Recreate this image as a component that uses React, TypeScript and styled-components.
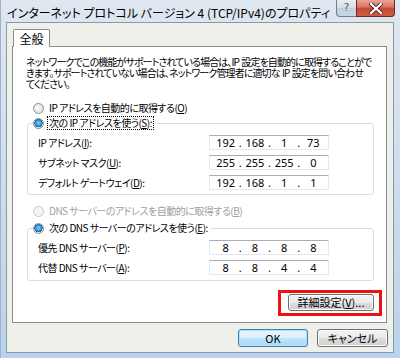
import styled, { createGlobalStyle } from "styled-components";

const GlobalStyle = createGlobalStyle`
  html, body {
    margin: 0;
    padding: 0;
    background: #fff;
  }
  body {
    font-family: "Noto Sans CJK JP", "Noto Sans", sans-serif;
    font-feature-settings: "palt" 1;
    color: #000;
  }
`

type IpProps = {
    value: string[]
}

function IpField(props: IpProps) {
    return (
        <IpBox>
            {props.value.map((part, i) => (
                <>
                    {i > 0 && <IpDot key={"d" + i}>.</IpDot>}
                    <IpPart key={"p" + i}>{part}</IpPart>
                </>
            ))}
        </IpBox>
    )
}

type RadioProps = {
    checked?: boolean
    disabled?: boolean
    focused?: boolean
    children: React.ReactNode
}

function Radio(props: RadioProps) {
    return (
        <RadioRow $disabled={props.disabled}>
            <RadioCircle $checked={props.checked} $disabled={props.disabled}/>
            <RadioText $focused={props.focused}>{props.children}</RadioText>
        </RadioRow>
    )
}

export default function App() {
    return (
        <>
            <GlobalStyle/>
            <Window>
                <TitleBar>
                    <Title>インターネット プロトコル バージョン 4 (TCP/IPv4)のプロパティ</Title>
                    <CaptionButtons>
                        <HelpButton>?</HelpButton>
                        <CloseButton>
                            <svg width="14" height="11" viewBox="0 0 14 11">
                                <path d="M2 1 L12 10 M12 1 L2 10" stroke="#4a2a2a" strokeWidth="4" strokeLinecap="square"/>
                                <path d="M2 1 L12 10 M12 1 L2 10" stroke="#fff" strokeWidth="2.2" strokeLinecap="square"/>
                            </svg>
                        </CloseButton>
                    </CaptionButtons>
                </TitleBar>
                <Client>
                    <TabStrip>
                        <Tab>全般</Tab>
                    </TabStrip>
                    <Panel>
                        <Description>
                            <DescLine>ネットワークでこの機能がサポートされている場合は、IP 設定を自動的に取得することがで</DescLine>
                            <DescLine>きます。サポートされていない場合は、ネットワーク管理者に適切な IP 設定を問い合わせ</DescLine>
                            <DescLine>てください。</DescLine>
                        </Description>
                        <TopRadio>
                            <Radio>IP アドレスを自動的に取得する(<u>O</u>)</Radio>
                        </TopRadio>
                        <Group>
                            <Legend>
                                <Radio checked focused>次の IP アドレスを使う(<u>S</u>):</Radio>
                            </Legend>
                            <FieldRow>
                                <FieldLabel>IP アドレス(<u>I</u>):</FieldLabel>
                                <IpField value={["192", "168", "1", "73"]}/>
                            </FieldRow>
                            <FieldRow>
                                <FieldLabel>サブネット マスク(<u>U</u>):</FieldLabel>
                                <IpField value={["255", "255", "255", "0"]}/>
                            </FieldRow>
                            <FieldRow>
                                <FieldLabel>デフォルト ゲートウェイ(<u>D</u>):</FieldLabel>
                                <IpField value={["192", "168", "1", "1"]}/>
                            </FieldRow>
                        </Group>
                        <DnsRadio>
                            <Radio disabled>DNS サーバーのアドレスを自動的に取得する(<u>B</u>)</Radio>
                        </DnsRadio>
                        <DnsGroup>
                            <Legend>
                                <Radio checked>次の DNS サーバーのアドレスを使う(<u>E</u>):</Radio>
                            </Legend>
                            <FieldRow>
                                <FieldLabel>優先 DNS サーバー(<u>P</u>):</FieldLabel>
                                <IpField value={["8", "8", "8", "8"]}/>
                            </FieldRow>
                            <FieldRow>
                                <FieldLabel>代替 DNS サーバー(<u>A</u>):</FieldLabel>
                                <IpField value={["8", "8", "4", "4"]}/>
                            </FieldRow>
                        </DnsGroup>
                        <Highlight>
                            <Button $width={86}>詳細設定(<u>V</u>)...</Button>
                        </Highlight>
                    </Panel>
                    <Footer>
                        <Button $width={70} $default>OK</Button>
                        <Button $width={71}>キャンセル</Button>
                    </Footer>
                </Client>
            </Window>
        </>
    )
}

const Window = styled.div`
  width: 400px;
  height: 358px;
  box-sizing: border-box;
  display: flex;
  flex-direction: column;
  background: linear-gradient(180deg, #dfe7f0 0%, #d2dfec 40%, #c4d6ea 80%, #b9d3ee 100%);
  border-left: 1px solid #9fb2c8;
`

const TitleBar = styled.div`
  height: 22px;
  display: flex;
  align-items: flex-start;
  justify-content: space-between;
`

const Title = styled.div`
  padding: 5px 0 0 6px;
  font-size: 12px;
  line-height: 16px;
  white-space: nowrap;
  color: #000;
`

const CaptionButtons = styled.div`
  display: flex;
  margin-right: 5px;
`

const HelpButton = styled.div`
  width: 20px;
  height: 17px;
  box-sizing: border-box;
  border: 1px solid #6f7f91;
  border-right: none;
  border-top: none;
  border-radius: 0 0 0 4px;
  background: linear-gradient(180deg, #e9eef4 0%, #d3dbe5 50%, #c4cfdc 51%, #cbd6e3 100%);
  font-family: "DejaVu Sans", sans-serif;
  font-size: 11px;
  line-height: 15px;
  text-align: center;
  color: #4d5a6b;
  text-shadow: 0 0 2px #fff;
`

const CloseButton = styled.div`
  width: 39px;
  height: 17px;
  box-sizing: border-box;
  border: 1px solid #6b2a22;
  border-top: none;
  border-radius: 0 0 4px 0;
  background: linear-gradient(180deg, #e8a497 0%, #d8735f 45%, #c24a32 50%, #cf5c3f 100%);
  display: flex;
  align-items: center;
  justify-content: center;
`

const Client = styled.div`
  flex: 1;
  margin: 0 6px 5px 5px;
  display: flex;
  flex-direction: column;
  background: #f0f0ea;
  border: 1px solid #8899ad;
`

const TabStrip = styled.div`
  display: flex;
  padding: 6px 0 0 6px;
  position: relative;
  z-index: 1;
`

const Tab = styled.div`
  width: 37px;
  height: 18px;
  box-sizing: border-box;
  border: 1px solid #898c95;
  border-bottom: none;
  border-radius: 2px 2px 0 0;
  background: #fff;
  font-size: 12px;
  line-height: 17px;
  text-align: center;
  margin-bottom: -1px;
`

const Panel = styled.div`
  flex: 1;
  margin: 0 6px 0 5px;
  padding: 0 4px 0 13px;
  display: flex;
  flex-direction: column;
  background: #fff;
  border: 1px solid #898c95;
  overflow: hidden;
`

const Description = styled.div`
  margin-top: 9px;
  display: flex;
  flex-direction: column;
  font-size: 10px;
  letter-spacing: -0.9px;
  word-spacing: 1px;
  white-space: nowrap;
`

const DescLine = styled.div`
  height: 11px;
  line-height: 11px;
`

const TopRadio = styled.div`
  margin: 12px 0 1px 7px;
`

const DnsRadio = styled.div`
  margin: 9px 0 3px 7px;
`

const RadioRow = styled.div<{ $disabled?: boolean }>`
  height: 14px;
  display: flex;
  align-items: center;
  gap: 4px;
  font-size: 10px;
  letter-spacing: -0.5px;
  color: ${p => p.$disabled ? "#a0a0a0" : "#000"};
  white-space: nowrap;
`

const RadioCircle = styled.span<{ $checked?: boolean, $disabled?: boolean }>`
  width: 11px;
  height: 11px;
  box-sizing: border-box;
  border-radius: 50%;
  border: 1px solid ${p => p.$disabled ? "#c8c8c8" : "#8e8f8f"};
  background: ${p => p.$disabled
    ? "#f4f4f4"
    : p.$checked
        ? "radial-gradient(circle at 50% 45%, #8fd3fb 0%, #2a8fd6 45%, #1b5f9e 60%, #e6e6e6 62%, #f8f8f8 100%)"
        : "radial-gradient(circle at 40% 40%, #fff 0%, #e4e4e4 60%, #d0d0d0 100%)"};
  flex-shrink: 0;
`

const RadioText = styled.span<{ $focused?: boolean }>`
  line-height: 12px;
  padding: 0 1px;
  outline: ${p => p.$focused ? "1px dotted #000" : "none"};
`

const Group = styled.fieldset`
  margin: 0 8px 0 1px;
  padding: 2px 44px 2px 10px;
  border: 1px solid #d5dfe5;
  border-radius: 3px;
  min-width: 0;
`

const DnsGroup = styled(Group)`
  padding-bottom: 3px;
`

const Legend = styled.legend`
  margin-left: -5px;
  padding: 0 2px 0 0;
`

const FieldRow = styled.div`
  height: 20px;
  display: flex;
  align-items: center;
  justify-content: space-between;
`

const FieldLabel = styled.span`
  font-size: 10px;
  letter-spacing: -0.5px;
  white-space: nowrap;
`

const IpBox = styled.div`
  width: 120px;
  height: 15px;
  box-sizing: border-box;
  display: flex;
  padding: 0 3px 0 4px;
  border: 1px solid #e3e9ef;
  border-top-color: #abadb3;
  background: #fff;
  font-family: "Noto Sans", sans-serif;
  font-size: 11px;
  line-height: 13px;
`

const IpPart = styled.span`
  flex: 1;
  text-align: center;
`

const IpDot = styled.span`
  width: 6px;
  text-align: center;
`

const Highlight = styled.div`
  align-self: flex-end;
  margin-top: 9px;
  margin-bottom: 6px;
  padding: 1px 5px 2px 7px;
  border: 3px solid #ee1111;
`

const Button = styled.div<{ $width: number, $default?: boolean }>`
  width: ${p => p.$width}px;
  height: 17px;
  box-sizing: border-box;
  border: 1px solid ${p => p.$default ? "#3c7fb1" : "#707070"};
  border-radius: 3px;
  background: ${p => p.$default
    ? "linear-gradient(180deg, #eaf6fd 0%, #d9f0fc 50%, #bee6fd 51%, #a7d9f5 100%)"
    : "linear-gradient(180deg, #f2f2f2 0%, #ebebeb 50%, #dddddd 51%, #cfcfcf 100%)"};
  box-shadow: inset 0 0 0 1px ${p => p.$default ? "#b4e0f7" : "#fcfcfc"};
  font-size: 11px;
  line-height: 15px;
  text-align: center;
  white-space: nowrap;
`

const Footer = styled.div`
  display: flex;
  justify-content: flex-end;
  gap: 9px;
  padding: 6px 5px 5px 0;

  & > div {
    height: 18px;
    line-height: 16px;
  }
`
